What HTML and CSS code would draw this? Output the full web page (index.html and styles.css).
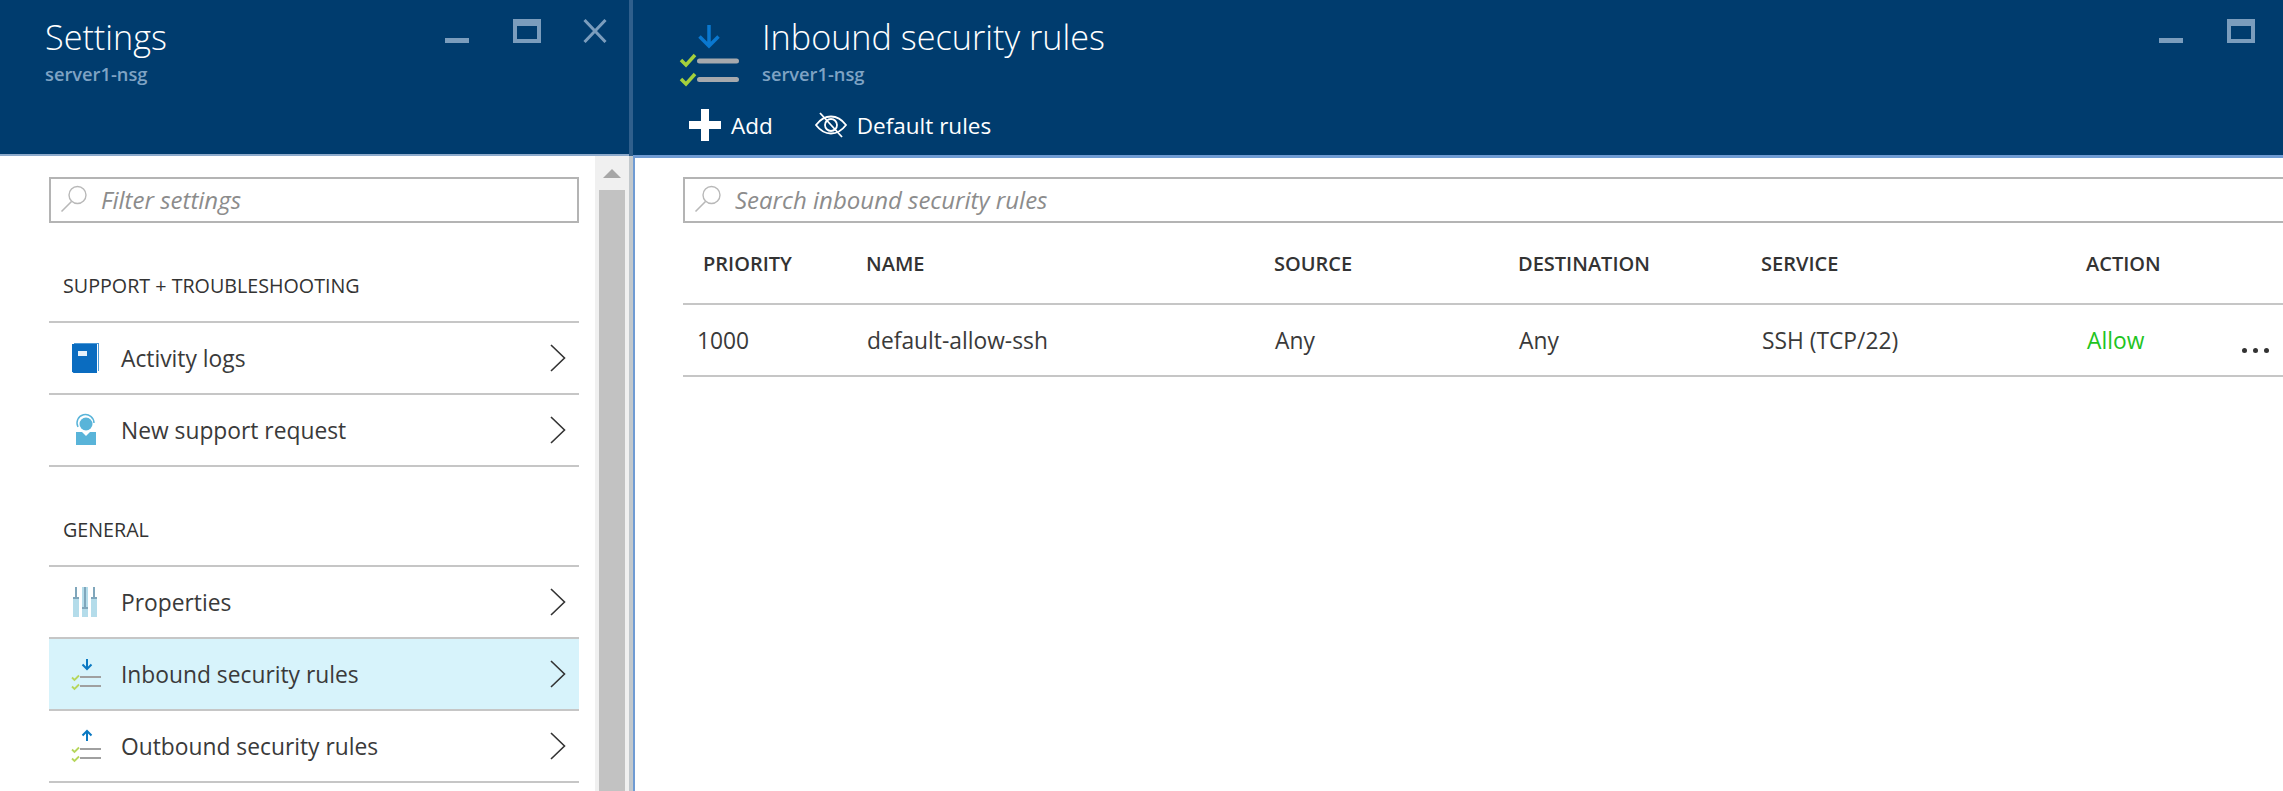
FILE: index.html
```html
<!DOCTYPE html>
<html lang="en">
<head>
<meta charset="utf-8">
<title>Inbound security rules</title>
<link rel="stylesheet" href="styles.css">
</head>
<body>
<div class="app">
  <section class="blade settings">
    <header class="head">
      <div class="titles">
        <h1>Settings</h1>
        <p>server1-nsg</p>
      </div>
      <div class="wincontrols">
        <span class="min"></span>
        <span class="max"></span>
        <svg class="close" width="24" height="24" viewBox="0 0 24 24"><path d="M1.500 1 22.500 23M22.500 1 1.500 23" stroke="#7b9dbd" stroke-width="3" fill="none"/></svg>
      </div>
    </header>
    <div class="settings-body">
      <div class="menu">
        <div class="search">
          <svg width="28" height="28" viewBox="0 0 28 28"><circle cx="17.500" cy="10" r="8.500" fill="none" stroke="#b8b8b8" stroke-width="1.400"/><path d="M11.500 16.500 1.500 26.500" stroke="#b8b8b8" stroke-width="1.600"/></svg>
          <span>Filter settings</span>
        </div>
        <h2 class="group first">SUPPORT + TROUBLESHOOTING</h2>
        <ul class="rows">
          <li class="row">
            <svg width="30" height="32" viewBox="0 0 30 32"><path d="M4 1h25v28h-1V2H4z" fill="#4f9ad6"/><path d="M2 2h25v29H3.500L2 29.500z" fill="#0a6cc0"/><rect x="8" y="9" width="9" height="5" fill="#e6f1fa"/></svg>
            <span>Activity logs</span>
            <svg class="chev" width="16" height="28" viewBox="0 0 16 28"><path d="M1 1 14.500 14 1 27" fill="none" stroke="#333" stroke-width="1.600"/></svg>
          </li>
          <li class="row">
            <svg width="30" height="32" viewBox="0 0 30 32"><path d="M6 18h6l4 4 4-4h6v13H6z" fill="#59b4d9"/><circle cx="16" cy="10" r="6.500" fill="#59b4d9"/><path d="M8 13a8.500 8.500 0 1 1 16-4" fill="none" stroke="#59b4d9" stroke-width="1.500"/></svg>
            <span>New support request</span>
            <svg class="chev" width="16" height="28" viewBox="0 0 16 28"><path d="M1 1 14.500 14 1 27" fill="none" stroke="#333" stroke-width="1.600"/></svg>
          </li>
        </ul>
        <h2 class="group">GENERAL</h2>
        <ul class="rows">
          <li class="row">
            <svg width="30" height="32" viewBox="0 0 30 32"><g fill="#b4dcea"><rect x="3" y="13" width="6" height="18"/><rect x="12" y="1" width="6" height="30"/><rect x="21" y="13" width="6" height="18"/></g><g fill="#7fa6bb"><rect x="5" y="1" width="2" height="12"/><rect x="14" y="1" width="2" height="21"/><rect x="23" y="1" width="2" height="12"/><rect x="3" y="11" width="6" height="2"/><rect x="12" y="21" width="6" height="2"/><rect x="21" y="11" width="6" height="2"/></g></svg>
            <span>Properties</span>
            <svg class="chev" width="16" height="28" viewBox="0 0 16 28"><path d="M1 1 14.500 14 1 27" fill="none" stroke="#333" stroke-width="1.600"/></svg>
          </li>
          <li class="row active">
            <svg width="30" height="32" viewBox="0 0 30 32"><path d="M17 1v10M12.500 6.500 17 11l4.500-4.500" fill="none" stroke="#0a78c2" stroke-width="2"/><path d="M10 19h21M10 28h21" stroke="#a0a0a0" stroke-width="2.200"/><path d="M2 19.500l2.500 2.500L9 17.500M2 28.500L4.500 31 9 26.500" fill="none" stroke="#b6d65c" stroke-width="1.800"/></svg>
            <span>Inbound security rules</span>
            <svg class="chev" width="16" height="28" viewBox="0 0 16 28"><path d="M1 1 14.500 14 1 27" fill="none" stroke="#333" stroke-width="1.600"/></svg>
          </li>
          <li class="row">
            <svg width="30" height="32" viewBox="0 0 30 32"><path d="M17 11V1M12.500 5.500 17 1l4.500 4.500" fill="none" stroke="#0a78c2" stroke-width="2"/><path d="M10 19h21M10 28h21" stroke="#a0a0a0" stroke-width="2.200"/><path d="M2 19.500l2.500 2.500L9 17.500M2 28.500L4.500 31 9 26.500" fill="none" stroke="#b6d65c" stroke-width="1.800"/></svg>
            <span>Outbound security rules</span>
            <svg class="chev" width="16" height="28" viewBox="0 0 16 28"><path d="M1 1 14.500 14 1 27" fill="none" stroke="#333" stroke-width="1.600"/></svg>
          </li>
        </ul>
      </div>
      <div class="scrollbar">
        <span class="arrow"></span>
        <span class="thumb"></span>
      </div>
    </div>
  </section>
  <div class="splitter"></div>
  <section class="blade rules">
    <header class="head rules-head">
      <div class="rules-top">
        <svg class="blade-icon" width="62" height="64" viewBox="0 0 62 64"><path d="M31 1v21M21.500 12.500 31 22l9.500-9.500" fill="none" stroke="#0a78d0" stroke-width="3.500"/><path d="M21.500 37h37M21.500 55.500h37" stroke="#a6a9ad" stroke-width="5" stroke-linecap="round"/><path d="M3 36l5 5 9-10M3 55l5 5 9-10" fill="none" stroke="#a4d03c" stroke-width="3.500"/></svg>
        <div class="titles">
          <h1>Inbound security rules</h1>
          <p>server1-nsg</p>
        </div>
        <div class="wincontrols right">
          <span class="min"></span>
          <span class="max"></span>
        </div>
      </div>
      <div class="commands">
        <span class="cmd">
          <svg width="32" height="32" viewBox="0 0 32 32"><path d="M12 0h8v12h12v8H20v12h-8V20H0v-8h12z" fill="#fff"/></svg>
          Add
        </span>
        <span class="cmd">
          <svg width="32" height="26" viewBox="0 0 32 26"><path d="M1 13C5.500 7 10.500 4.500 16 4.500S26.500 7 31 13c-4.500 6-9.500 8.500-15 8.500S5.500 19 1 13z" fill="none" stroke="#fff" stroke-width="1.800"/><circle cx="16" cy="13" r="6" fill="none" stroke="#fff" stroke-width="1.800"/><path d="M5 1l22 24" stroke="#fff" stroke-width="1.800"/></svg>
          Default rules
        </span>
      </div>
    </header>
    <div class="rules-body">
      <div class="search wide">
        <svg width="28" height="28" viewBox="0 0 28 28"><circle cx="17.500" cy="10" r="8.500" fill="none" stroke="#b8b8b8" stroke-width="1.400"/><path d="M11.500 16.500 1.500 26.500" stroke="#b8b8b8" stroke-width="1.600"/></svg>
        <span>Search inbound security rules</span>
      </div>
      <div class="grid-row grid-head">
        <span>PRIORITY</span><span>NAME</span><span>SOURCE</span><span>DESTINATION</span><span>SERVICE</span><span>ACTION</span>
      </div>
      <div class="grid-row grid-data">
        <span class="prio">1000</span><span>default-allow-ssh</span><span>Any</span><span>Any</span><span>SSH (TCP/22)</span><span class="allow">Allow</span>
        <span class="more"><i></i><i></i><i></i></span>
      </div>
    </div>
  </section>
</div>
</body>
</html>
```

FILE: styles.css
```css
* { box-sizing: border-box; }
html, body { margin: 0; height: 100%; overflow: hidden; background: #fff; }
body { font-family: "Open Sans", "Noto Sans", sans-serif; color: #3a3a3a; }
.app { display: flex; width: 2283px; height: 791px; overflow: hidden; }
.blade { display: flex; flex-direction: column; min-width: 0; }
.settings { width: 629px; flex: none; }
.splitter { width: 4px; flex: none; background: linear-gradient(#2f5f8c 156px, #c2c8cc 156px); }
.rules { flex: 1; }
.head { height: 155px; flex: none; background: #003c6e; color: #fff; display: flex; justify-content: space-between; padding: 16px 0 0 44px; }
.settings .head { padding-left: 45px; border-bottom: 2px solid #8daacb; height: 156px; }
.titles h1 { margin: 0; font-size: 34.200px; line-height: 42px; font-weight: 300; }
.titles p { margin: 5px 0 0; font-size: 18.300px; line-height: 22px; font-weight: 600; color: #7fa3c4; }
.wincontrols { display: flex; align-items: flex-start; padding: 3px 0 0; margin-right: 22px; }
.wincontrols.right { margin-right: 28px; margin-left: auto; }
.min { width: 24px; height: 5px; margin: 19px 44px 0 0; background: #7b9dbd; }
.max { width: 28px; height: 24px; border: 4px solid #7b9dbd; border-top-width: 7px; margin-right: 42px; }
.wincontrols.right .max { margin-right: 0; width: 28px; }
.close { display: block; }
.settings-body { flex: 1; display: flex; min-height: 0; }
.menu { flex: 1; padding: 21px 0 0 49px; min-width: 0; }
.search { display: flex; align-items: center; gap: 13px; height: 46px; width: 530px; border: 2px solid #b4b4b4; padding: 0 0 2px 9px; font-size: 24px; font-style: italic; color: #8c8c8c; }
.search svg { flex: none; }
.group { margin: 51px 0 0 14px; height: 47px; font-size: 19.700px; line-height: 24px; font-weight: 400; color: #333; }
.rows { list-style: none; margin: 0; padding: 0; width: 530px; border-top: 2px solid #c6c6c6; }
.row { height: 72px; display: flex; align-items: center; padding: 0 13px 0 21px; border-bottom: 2px solid #c6c6c6; font-size: 22.800px; color: #3a3a3a; }
.row > svg { overflow: visible; }
.row > svg:first-child { flex: none; margin-right: 21px; }
.row span { flex: 1; }
.row.active { background: #d7f3fb; }
.chev { flex: none; }
.scrollbar { width: 34px; flex: none; background: #f0f0f0; padding: 13px 4px 0; }
.arrow { display: block; width: 0; margin: 0 auto 12px; border: 9px solid transparent; border-top: 0; border-bottom: 9px solid #a6a6a6; }
.thumb { display: block; height: 620px; background: #c2c2c2; }
.rules-head { display: block; padding: 0; height: 158px; border-bottom: 3px solid #6f9bd3; }
.rules-top { display: flex; padding: 16px 0 0 45px; height: 109px; }
.blade-icon { margin: 8px 22px 0 0; flex: none; }
.commands { display: flex; gap: 42px; padding-left: 56px; font-size: 22.500px; font-weight: 400; }
.cmd { display: flex; align-items: center; gap: 10px; height: 32px; }
.rules-body { flex: 1; border-left: 2px solid #6f9bd3; padding: 19px 0 0 48px; }
.search.wide { width: 1700px; }
.grid-row { display: grid; grid-template-columns: 163px 408px 244px 243px 325px 1fr; width: 1620px; align-items: center; border-bottom: 2px solid #c6c6c6; }
.grid-head { height: 82px; padding: 0 0 0 20px; font-size: 20px; font-weight: 600; color: #333; }
.grid-data { height: 72px; padding-left: 14px; grid-template-columns: 170px 408px 244px 243px 325px 155px auto; font-size: 22.800px; }
.allow { color: #1ec41e; }
.more { display: flex; gap: 6px; margin: 20px 0 0; }
.more i { width: 5px; height: 5px; border-radius: 50%; background: #333; }
```
